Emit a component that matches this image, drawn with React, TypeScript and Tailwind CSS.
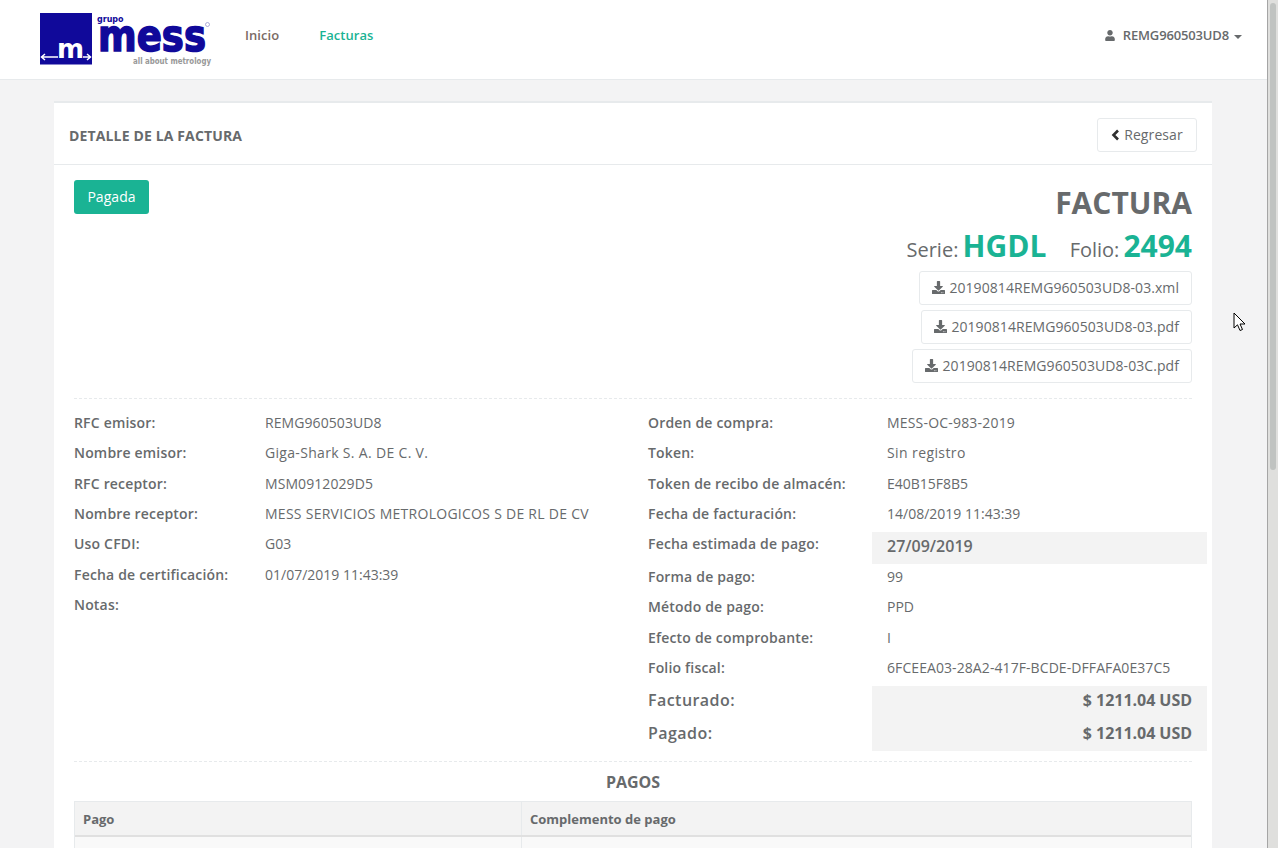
import { FaDownload, FaUser } from "react-icons/fa";

const leftRows = [
  ["RFC emisor:", "REMG960503UD8", "tracking-[0.08px]"],
  ["Nombre emisor:", "Giga-Shark S. A. DE C. V.", "tracking-[0.32px]"],
  ["RFC receptor:", "MSM0912029D5", "tracking-[0.08px]"],
  ["Nombre receptor:", "MESS SERVICIOS METROLOGICOS S DE RL DE CV", "tracking-[0.27px]"],
  ["Uso CFDI:", "G03", ""],
  ["Fecha de certificación:", "01/07/2019 11:43:39", ""],
  ["Notas:", "", ""],
];

const rightTop = [
  ["Orden de compra:", "MESS-OC-983-2019", "tracking-[0.19px]"],
  ["Token:", "Sin registro", "tracking-[0.4px]"],
  ["Token de recibo de almacén:", "E40B15F8B5", ""],
  ["Fecha de facturación:", "14/08/2019 11:43:39", ""],
];

const rightBottom = [
  ["Forma de pago:", "99", ""],
  ["Método de pago:", "PPD", ""],
  ["Efecto de comprobante:", "I", ""],
  ["Folio fiscal:", "6FCEEA03-28A2-417F-BCDE-DFFAFA0E37C5", "tracking-[0.08px]"],
];

const files = [
  "20190814REMG960503UD8-03.xml",
  "20190814REMG960503UD8-03.pdf",
  "20190814REMG960503UD8-03C.pdf",
];

function Logo() {
  return (
    <svg width="176" height="54" viewBox="0 0 176 54" className="block">
      <rect x="0" y="0" width="52" height="51.500" fill="#10099a" />
      <text x="30.500" y="44.500" textAnchor="middle" fontFamily="DejaVu Sans" fontWeight="700" fontSize="26" fill="#fff">m</text>
      <path d="M2 44H18M43 44H50M5 41L1.500 44L5 47M47 41L50.500 44L47 47" fill="none" stroke="#fff" strokeWidth="1.500" />
      <text x="57" y="8.500" fontFamily="DejaVu Sans" fontWeight="700" fontSize="8" fill="#10099a">grupo</text>
      <text x="58" y="38" fontFamily="DejaVu Sans" fontWeight="700" fontSize="44" textLength="108" lengthAdjust="spacingAndGlyphs" stroke="#10099a" strokeWidth="1.600" fill="#10099a">mess</text>
      <circle cx="167.500" cy="11.500" r="2" fill="none" stroke="#7a7ac0" strokeWidth="0.600" />
      <text x="93" y="50.500" fontFamily="DejaVu Sans" fontWeight="700" fontSize="8" textLength="78" lengthAdjust="spacingAndGlyphs" fill="#999">all about metrology</text>
    </svg>
  );
}

function Row({ label, value, labelW, track, h }: { label: string; value: string; labelW: string; track: string; h: string }) {
  return (
    <div className={`flex ${h} leading-[20px]`}>
      <div className={`${labelW} shrink-0 font-semibold tracking-[0.18px]`}>{label}</div>
      <div className={track}>{value}</div>
    </div>
  );
}

export default function App() {
  return (
    <div className="flex h-[848px] overflow-hidden bg-[#f3f3f4] font-['Open_Sans',sans-serif] text-[14px] text-[#676a6c]">
      <div className="relative min-w-0 flex-1">
        <header className="flex h-[80px] items-center justify-between border-b border-[#e7eaec] bg-white pl-[40px] pr-[25px]">
          <div className="flex items-center">
            <Logo />
            <nav className="-mt-[8px] ml-[29px] flex items-center gap-[40px] text-[13px] font-semibold">
              <span className="tracking-[0.05px] text-[#7a6a64]">Inicio</span>
              <span className="tracking-[0.05px] text-[#1ab394]">Facturas</span>
            </nav>
          </div>
          <div className="-mt-[8px] flex items-center text-[13px] font-semibold">
            <FaUser className="mr-[8px] h-[11px] w-[10px]" />
            <span className="tracking-[-0.15px]">REMG960503UD8</span>
            <span className="ml-[5px] mt-[2px] h-0 w-0 border-x-[4px] border-t-[4px] border-x-transparent border-t-[#676a6c]"></span>
          </div>
        </header>

        <main className="ml-[54px] mt-[21px] w-[1158px] border-t-2 border-[#e7eaec] bg-white">
          <div className="flex h-[62px] items-center justify-between border-b border-[#e7eaec] px-[15px]">
            <h5 className="mt-[3px] text-[14px] font-bold tracking-[0.14px]">DETALLE DE LA FACTURA</h5>
            <button className="mt-[3px] flex h-[34px] w-[100px] items-center justify-center rounded-[3px] border border-[#e7eaec] bg-white pb-[1px] text-[14px] tracking-[0.1px]">
              <svg width="9" height="12" viewBox="0 0 9 12" className="mr-[4px] mt-[1px]">
                <path d="M7 1.500L2.500 6L7 10.500" fill="none" stroke="#2f2f2f" strokeWidth="2.600" />
              </svg>
              Regresar
            </button>
          </div>

          <div className="px-[20px] pt-[15px]">
            <div className="relative h-[219px] border-b border-dashed border-[#e7eaec]">
              <button className="absolute left-0 top-0 h-[34px] w-[75px] rounded-[3px] bg-[#1ab394] pb-[1px] text-[14px] tracking-[0.05px] text-white">
                Pagada
              </button>
              <div className="flex flex-col items-end">
                <div className="mt-[4px] h-[38px] text-[30px] font-bold leading-[38px]">FACTURA</div>
                <div className="mt-[2px] flex h-[47px] items-baseline text-[20px] leading-[43px]">
                  <span>Serie:</span>
                  <span className="ml-[4px] text-[30px] font-bold tracking-[0.1px] text-[#1ab394]">HGDL</span>
                  <span className="ml-[23px]">Folio:</span>
                  <span className="ml-[4px] text-[30px] font-bold text-[#1ab394]">2494</span>
                </div>
                <div className="flex flex-col items-end gap-[5px]">
                  {files.map((f) => (
                    <button
                      key={f}
                      className="flex h-[34px] items-center rounded-[3px] border border-[#e7eaec] bg-white px-[12px] pb-[2px] text-[14px] tracking-[0.07px]"
                    >
                      <FaDownload className="mr-[4px] mt-[1px] h-[13px] w-[13px]" />
                      {f}
                    </button>
                  ))}
                </div>
              </div>
            </div>

            <div className="flex h-[363px] border-b border-dashed border-[#e7eaec] pt-[14px]">
              <div className="w-[574px] shrink-0">
                {leftRows.map(([l, v, t]) => (
                  <Row key={l} label={l} value={v} labelW="w-[191px]" track={t} h="h-[30.35px]" />
                ))}
              </div>
              <div className="min-w-0 flex-1">
                {rightTop.map(([l, v, t]) => (
                  <Row key={l} label={l} value={v} labelW="w-[239px]" track={t} h="h-[30.3px]" />
                ))}
                <div className="flex h-[33px]">
                  <div className="w-[224px] shrink-0 font-semibold leading-[20px] tracking-[0.18px]">Fecha estimada de pago:</div>
                  <div className="-mr-[15px] -mt-[2.2px] h-[32px] flex-1 bg-[#f3f3f3] pl-[15px] text-[16px] font-semibold leading-[28px]">
                    27/09/2019
                  </div>
                </div>
                {rightBottom.map(([l, v, t]) => (
                  <Row key={l} label={l} value={v} labelW="w-[239px]" track={t} h="h-[30.3px]" />
                ))}
                <div className="-mt-[2.4px] flex">
                  <div className="w-[224px] shrink-0 text-[16px] font-semibold tracking-[0.45px]">
                    <div className="h-[33px] leading-[28px]">Facturado:</div>
                    <div className="h-[32px] leading-[28px]">Pagado:</div>
                  </div>
                  <div className="-mr-[15px] h-[65px] flex-1 bg-[#f3f3f3] pr-[15px] text-right text-[16px] font-bold tracking-[-0.04px]">
                    <div className="h-[33px] leading-[28px]">$ 1211.04 USD</div>
                    <div className="h-[32px] leading-[28px]">$ 1211.04 USD</div>
                  </div>
                </div>
              </div>
            </div>

            <h3 className="mt-[8px] h-[31px] text-center text-[16px] font-bold leading-[24px]">PAGOS</h3>
            <div className="border border-[#e7eaec]">
              <div className="flex h-[35px] border-b-2 border-[#e0e0e0] bg-[#f3f3f3] text-[13px] font-bold leading-[34px]">
                <div className="w-[447px] border-r border-[#e7eaec] pl-[8px]">Pago</div>
                <div className="pl-[8px]">Complemento de pago</div>
              </div>
              <div className="flex h-[60px] bg-[#f9f9f9]">
                <div className="w-[447px] border-r border-[#e7eaec]"></div>
              </div>
            </div>
          </div>
        </main>

        <svg width="14" height="21" viewBox="0 0 14 21" className="absolute left-[1233px] top-[312px]">
          <path d="M1 1V16L4.500 12.800L7 18.500L9.500 17.500L7 12H12Z" fill="#fff" stroke="#000" strokeWidth="1" />
        </svg>
      </div>
      <div className="w-[11px] shrink-0 border-l border-[#a5a5a5] bg-[#dfdfdd] pl-[2px]">
        <div className="mt-[3px] h-[467px] w-[6px] rounded-[3px] bg-[#c0c3c1]"></div>
      </div>
    </div>
  );
}
